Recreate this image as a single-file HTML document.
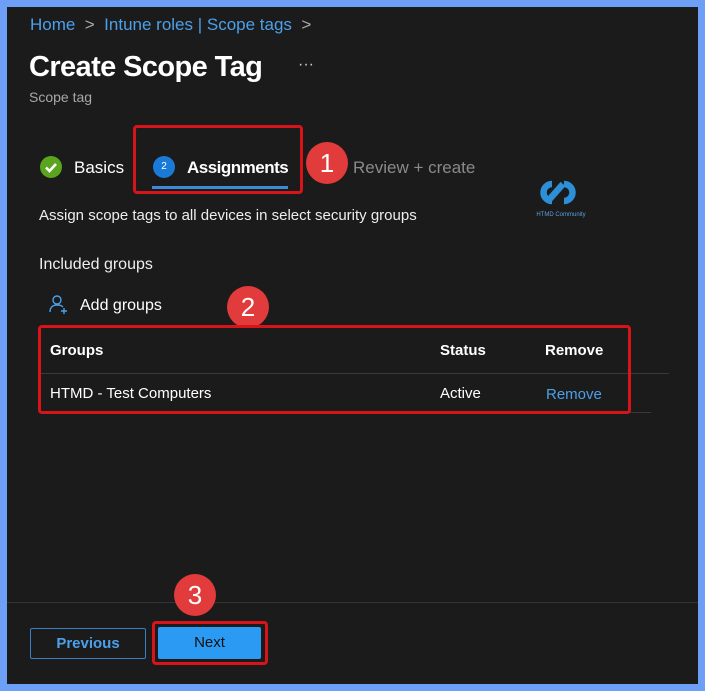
<!DOCTYPE html>
<html><head><style>
*{margin:0;padding:0;box-sizing:border-box}
body{width:705px;height:691px;background:#6e9ff6;position:relative;overflow:hidden;font-family:"Liberation Sans",sans-serif;color:#fff}
.in{position:absolute;left:7px;top:7px;width:691px;height:677px;background:#1b1b1b}
.a{position:absolute;white-space:nowrap}
.red{position:absolute;border:3px solid #d7141a;border-radius:4px}
.badge{position:absolute;background:#e23b3b;border-radius:50%;color:#fff;font-size:26px;text-align:center;font-weight:normal}
</style></head><body>
<div class="in"></div>
<div class="a" style="left:30px;top:15px;font-size:17px;color:#4ca0ea">Home <span style="color:#aaa">&nbsp;&gt;&nbsp;</span> Intune roles | Scope tags <span style="color:#aaa">&nbsp;&gt;</span></div>
<div class="a" style="left:29px;top:51px;font-size:29px;font-weight:bold;letter-spacing:-0.6px">Create Scope Tag</div>
<div class="a" style="left:298px;top:56px;font-size:16px;color:#ccc">···</div>
<div class="a" style="left:29px;top:89px;font-size:14px;color:#a8a8a8">Scope tag</div>

<div class="a" style="left:40px;top:156px;width:22px;height:22px;border-radius:50%;background:#5aa51d"></div>
<svg class="a" style="left:40px;top:156px" width="22" height="22"><path d="M6 11.5l3.5 3.5 6.5-7" stroke="#fff" stroke-width="2.6" fill="none"/></svg>
<div class="a" style="left:74px;top:158px;font-size:17px">Basics</div>
<div class="a" style="left:153px;top:156px;width:22px;height:22px;border-radius:50%;background:#1a7ad8;font-size:10px;text-align:center;line-height:22px">2</div>
<div class="a" style="left:187px;top:158px;font-size:17px;font-weight:bold;letter-spacing:-0.5px">Assignments</div>
<div class="a" style="left:152px;top:186px;width:136px;height:3px;background:#3a8bd9"></div>
<div class="red" style="left:133px;top:125px;width:170px;height:69px"></div>
<div class="badge" style="left:306px;top:142px;width:42px;height:42px;line-height:42px">1</div>
<div class="a" style="left:353px;top:158px;font-size:17px;color:#8a8a8a">Review + create</div>

<svg class="a" style="left:533px;top:176px" width="56" height="44"><path d="M19 8a8.5 8.5 0 1 0 0 17M15 25l15-17M31 8a8.5 8.5 0 1 1 0 17" stroke="#2d8fd8" stroke-width="6.5" fill="none"/><text x="28" y="40" font-size="6" fill="#5a9fe0" text-anchor="middle" font-family="Liberation Sans">HTMD Community</text></svg>

<div class="a" style="left:39px;top:207px;font-size:15px;color:#eee">Assign scope tags to all devices in select security groups</div>
<div class="a" style="left:39px;top:256px;font-size:16px;color:#eee">Included groups</div>
<svg class="a" style="left:49px;top:294px" width="22" height="22"><circle cx="8" cy="6" r="4" stroke="#4ca0ea" stroke-width="1.4" fill="none"/><path d="M1 18c0-5 3-7 7-7s5 1 6 2M15 14v6M12 17h6" stroke="#4ca0ea" stroke-width="1.4" fill="none"/></svg>
<div class="a" style="left:80px;top:297px;font-size:16px">Add groups</div>
<div class="badge" style="left:227px;top:286px;width:42px;height:42px;line-height:42px">2</div>

<div class="a" style="left:50px;top:342px;font-size:15px;font-weight:bold">Groups</div>
<div class="a" style="left:440px;top:342px;font-size:15px;font-weight:bold">Status</div>
<div class="a" style="left:545px;top:342px;font-size:15px;font-weight:bold">Remove</div>
<div class="a" style="left:39px;top:373px;width:630px;height:1px;background:#3a3a3a"></div>
<div class="a" style="left:50px;top:385px;font-size:15px">HTMD - Test Computers</div>
<div class="a" style="left:440px;top:385px;font-size:15px">Active</div>
<div class="a" style="left:546px;top:386px;font-size:15px;color:#4ca0ea">Remove</div>
<div class="a" style="left:39px;top:412px;width:612px;height:1px;background:#3a3a3a"></div>
<div class="red" style="left:38px;top:325px;width:593px;height:89px"></div>

<div class="a" style="left:7px;top:602px;width:691px;height:1px;background:#333"></div>
<div class="badge" style="left:174px;top:574px;width:42px;height:42px;line-height:42px">3</div>
<div class="a" style="left:30px;top:628px;width:116px;height:31px;border:1px solid #3b7ec2;border-radius:2px;color:#4ca0ea;font-size:15px;font-weight:bold;text-align:center;line-height:29px">Previous</div>
<div class="a" style="left:158px;top:627px;width:103px;height:32px;background:#2b9af3;border-radius:2px;color:#111;font-size:15px;text-align:center;line-height:32px">Next</div>
<div class="red" style="left:152px;top:621px;width:116px;height:44px"></div>
</body></html>
